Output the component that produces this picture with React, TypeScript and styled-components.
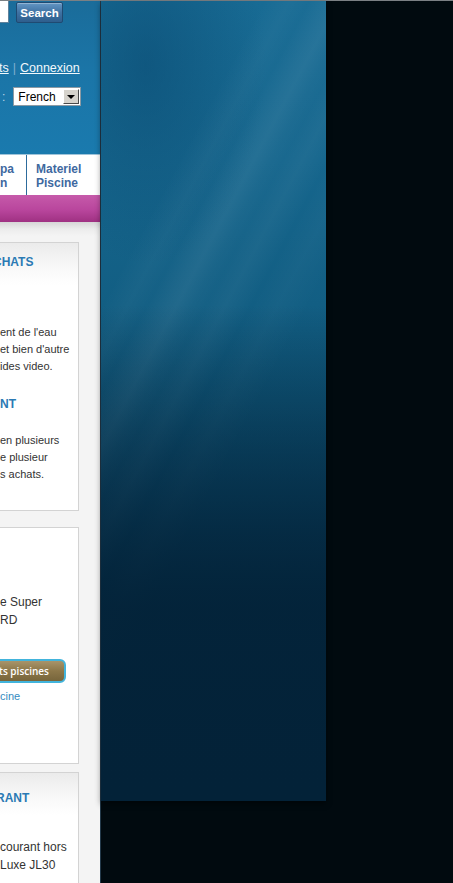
import React from "react";
import styled, { createGlobalStyle } from "styled-components";

const GlobalStyle = createGlobalStyle`
  html, body {
    margin: 0;
    padding: 0;
  }
  body {
    background: #010a0f;
    font-family: "Liberation Sans", Arial, sans-serif;
    overflow: hidden;
  }
  * {
    box-sizing: border-box;
  }
`;

const Page = styled.div`
  display: flex;
  align-items: flex-start;
  height: 883px;
  border-top: 1px solid #7b8084;
`;

const Sidebar = styled.aside`
  width: 101px;
  flex-shrink: 0;
  height: 882px;
  background: #f4f4f4;
  border-right: 1px solid #23394a;
  overflow: hidden;
`;

const Header = styled.header`
  height: 154px;
  background: linear-gradient(to bottom, #1a6c9a 0%, #1b75a7 45%, #1a7aae 100%);
  border-bottom: 1px solid #9fc4da;
  color: #eef5fa;
`;

const SearchRow = styled.div`
  display: flex;
  align-items: flex-start;
  height: 22px;
`;

const SearchInput = styled.div`
  width: 9px;
  height: 22px;
  background: #fff;
  border: 1px solid #5f819b;
  border-left: 0;
  border-top: 0;
`;

const SearchButton = styled.button`
  margin: 1px 0 0 7px;
  width: 47px;
  height: 21px;
  padding: 0;
  border: 1px solid #1f4a72;
  border-radius: 2px;
  background: linear-gradient(to bottom, #6396c4 0%, #3f72a3 50%, #2e5e8d 100%);
  box-shadow: inset 0 1px 0 rgba(255, 255, 255, 0.3);
  color: #fff;
  font: bold 11.5px "Liberation Sans", Arial, sans-serif;
`;

const LoginRow = styled.div`
  display: flex;
  align-items: center;
  margin-top: 38px;
  height: 14px;
  font-size: 12.5px;
`;

const TopLink = styled.a<{ $shift?: number }>`
  color: #f2f8fc;
  text-decoration: underline;
  margin-left: ${(p) => p.$shift ?? 0}px;
  white-space: nowrap;
`;

const Sep = styled.span`
  color: #80b0cd;
  margin: 0 4px;
`;

const LangRow = styled.div`
  display: flex;
  align-items: center;
  margin-top: 12px;
  height: 19px;
  font-size: 12px;
`;

const LangLabel = styled.span`
  margin-left: 2px;
  color: #b9d5e6;
`;

const Select = styled.div`
  display: flex;
  align-items: center;
  justify-content: space-between;
  margin-left: 8px;
  width: 68px;
  height: 19px;
  padding: 0 1px 0 4px;
  background: #fff;
  border: 1px solid #8c9aa4;
  color: #000;
  font-size: 12px;
`;

const SelectArrow = styled.span`
  display: flex;
  align-items: center;
  justify-content: center;
  width: 16px;
  height: 15px;
  background: #d6d3cc;
  border: 1px solid;
  border-color: #fff #4a4a4a #4a4a4a #fff;

  &::after {
    content: "";
    border-left: 4px solid transparent;
    border-right: 4px solid transparent;
    border-top: 4px solid #000;
    margin-top: 1px;
  }
`;

const Nav = styled.nav`
  display: flex;
  height: 40px;
  background: #fff;
`;

const Tab = styled.div<{ $pad?: number; $divider?: boolean }>`
  padding: 7px 0 0 ${(p) => p.$pad ?? 0}px;
  width: ${(p) => (p.$divider ? "27px" : "auto")};
  border-right: ${(p) => (p.$divider ? "1px solid #2d6b9c" : "none")};
  color: #40699f;
  font-weight: bold;
  font-size: 12px;
  line-height: 14px;
  white-space: nowrap;
`;

const PinkBar = styled.div`
  height: 27px;
  background: linear-gradient(to bottom, #c65aaa 0%, #b9469d 55%, #9f3182 100%);
`;

const Content = styled.div`
  background: linear-gradient(to bottom, #d6d6d6 0px, #ececec 7px, #f4f4f4 14px);
  padding-top: 20px;
  display: flex;
  flex-direction: column;
`;

const Card = styled.section<{ $gap?: number; $head?: boolean }>`
  width: 79px;
  margin-top: ${(p) => p.$gap ?? 0}px;
  background: ${(p) =>
    p.$head ? "linear-gradient(to bottom, #ebebeb 0px, #f8f8f8 24px, #fff 42px)" : "#fff"};
  border: 1px solid #d3d3d3;
  border-left: 0;
  padding-bottom: ${(p) => (p.$head ? 27 : 60)}px;
`;

const Title = styled.h3<{ $top: number; $shift?: number }>`
  margin: ${(p) => p.$top}px 0 0 ${(p) => p.$shift ?? 0}px;
  color: #2b7ab4;
  font-size: 12px;
  line-height: 16px;
  font-weight: bold;
  white-space: nowrap;
`;

const Text = styled.p<{ $top: number; $size?: number; $lh?: number }>`
  margin: ${(p) => p.$top}px 0 0;
  color: #333;
  font-size: ${(p) => p.$size ?? 11}px;
  line-height: ${(p) => p.$lh ?? 17}px;
  white-space: nowrap;
`;

const ShopButton = styled.div`
  display: flex;
  align-items: center;
  justify-content: flex-end;
  margin: 30px 0 0 -40px;
  width: 106px;
  height: 24px;
  padding-right: 15px;
  border: 2px solid #42b4dc;
  border-radius: 6px;
  background: linear-gradient(to bottom, #a8946a 0%, #8c7749 50%, #77653b 100%);
  color: #fff;
  font: 600 10px "Open Sans", "Liberation Sans", sans-serif;
  white-space: nowrap;
`;

const CardLink = styled.a`
  display: block;
  margin-top: 6px;
  color: #338bc0;
  font-size: 11px;
  line-height: 14px;
`;

const Backdrop = styled.div`
  width: 225px;
  height: 800px;
  flex-shrink: 0;
  box-shadow: 0 3px 6px rgba(0, 0, 0, 0.45);
  background:
    linear-gradient(
      to bottom,
      rgba(3, 34, 56, 0) 0%,
      rgba(3, 34, 56, 0) 38%,
      rgba(3, 34, 56, 0.5) 60%,
      rgba(3, 34, 56, 0.9) 76%,
      rgba(3, 34, 56, 1) 100%
    ),
    linear-gradient(
      118deg,
      transparent 25%,
      rgba(255, 255, 255, 0.03) 29%,
      rgba(255, 255, 255, 0.01) 32%,
      rgba(255, 255, 255, 0.05) 35%,
      rgba(255, 255, 255, 0.065) 36.5%,
      rgba(255, 255, 255, 0.03) 39%,
      rgba(255, 255, 255, 0.015) 41%,
      rgba(255, 255, 255, 0.04) 44%,
      transparent 48%,
      rgba(255, 255, 255, 0.025) 52%,
      transparent 57%
    ),
    radial-gradient(ellipse 120px 200px at 20% 8%, rgba(8, 70, 110, 0.5), transparent),
    linear-gradient(
      to bottom,
      #186b94 0%,
      #16668d 20%,
      #125e83 38%,
      #0e5274 50%,
      #0a4362 62%,
      #06334e 74%,
      #03243c 100%
    );
`;

const App = () => {
  return (
    <>
      <GlobalStyle />
      <Page>
        <Sidebar>
          <Header>
            <SearchRow>
              <SearchInput />
              <SearchButton>Search</SearchButton>
            </SearchRow>
            <LoginRow>
              <TopLink $shift={-1}>ts</TopLink>
              <Sep>|</Sep>
              <TopLink>Connexion</TopLink>
            </LoginRow>
            <LangRow>
              <LangLabel>:</LangLabel>
              <Select>
                <span>French</span>
                <SelectArrow />
              </Select>
            </LangRow>
          </Header>
          <Nav>
            <Tab $divider>
              pa
              <br />n
            </Tab>
            <Tab $pad={9}>
              Materiel
              <br />
              Piscine
            </Tab>
          </Nav>
          <PinkBar />
          <Content>
            <Card $head>
              <Title $top={11} $shift={-7}>
                CHATS
              </Title>
              <Text $top={54}>
                ent de l'eau
                <br />
                et bien d'autre
                <br />
                ides video.
              </Text>
              <Title $top={21}>NT</Title>
              <Text $top={20}>
                en plusieurs
                <br />
                e plusieur
                <br />s achats.
              </Text>
            </Card>
            <Card $gap={16}>
              <Text $top={65} $size={12} $lh={18}>
                e Super
                <br />
                RD
              </Text>
              <ShopButton>ots piscines</ShopButton>
              <CardLink>cine</CardLink>
            </Card>
            <Card $gap={8} $head>
              <Title $top={17} $shift={-4}>
                RANT
              </Title>
              <Text $top={32} $size={12} $lh={18}>
                courant hors
                <br />
                Luxe JL30
              </Text>
            </Card>
          </Content>
        </Sidebar>
        <Backdrop />
      </Page>
    </>
  );
};

export default App;
